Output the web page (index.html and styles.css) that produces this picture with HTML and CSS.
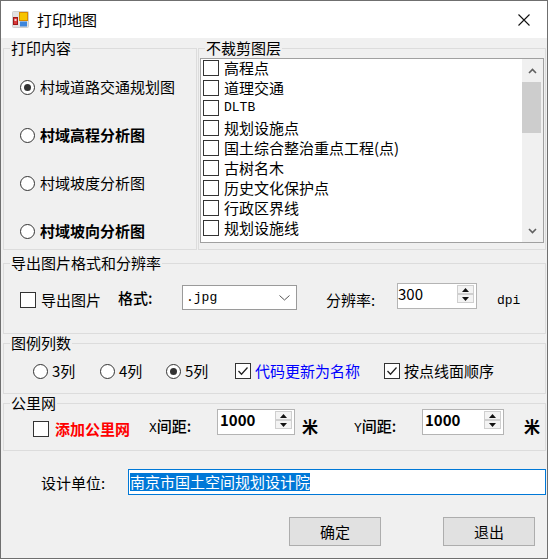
FILE: index.html
```html
<!DOCTYPE html>
<html lang="zh">
<head>
    <meta charset="UTF-8">
    <title>打印地图</title>
    <link rel="stylesheet" href="styles.css">
</head>
<body>
    <div class="window">
        <div class="titlebar">
            <svg class="app-icon" viewBox="0 0 17 17">
                <rect x="0.5" y="0.5" width="16" height="16" rx="1" fill="#e2e2e2" stroke="#cfcfcf"/>
                <rect x="7.5" y="1.5" width="8" height="8" fill="#f6c400" stroke="#d88a00"/>
                <rect x="1.5" y="6.5" width="4" height="7" fill="#d93a3a" stroke="#a01818"/>
                <rect x="2.5" y="8" width="2" height="2" fill="#f4d0d0"/>
                <rect x="8" y="10.5" width="7" height="5" fill="#3d86dc"/>
            </svg>
            <span class="title">打印地图</span>
            <span class="close">
                <svg width="12" height="12" viewBox="0 0 12 12"><path d="M0.5 0.5 L11.5 11.5 M11.5 0.5 L0.5 11.5" stroke="#111" stroke-width="1.1"/></svg>
            </span>
        </div>

        <div class="body">
            <div class="top-row">
                <fieldset class="group group-tall">
                    <legend>打印内容</legend>
                    <div class="radio-list">
                        <label class="opt"><span class="radio checked"></span>村域道路交通规划图</label>
                        <label class="opt bold"><span class="radio"></span>村域高程分析图</label>
                        <label class="opt"><span class="radio"></span>村域坡度分析图</label>
                        <label class="opt bold"><span class="radio"></span>村域坡向分析图</label>
                    </div>
                </fieldset>

                <fieldset class="group group-tall">
                    <legend>不裁剪图层</legend>
                    <div class="listbox">
                        <ul class="items">
                            <li><span class="check"></span><span>高程点</span></li>
                            <li><span class="check"></span><span>道理交通</span></li>
                            <li><span class="check"></span><span class="mono">DLTB</span></li>
                            <li><span class="check"></span><span>规划设施点</span></li>
                            <li><span class="check"></span><span>国土综合整治重点工程(点)</span></li>
                            <li><span class="check"></span><span>古树名木</span></li>
                            <li><span class="check"></span><span>历史文化保护点</span></li>
                            <li><span class="check"></span><span>行政区界线</span></li>
                            <li><span class="check"></span><span>规划设施线</span></li>
                        </ul>
                        <div class="scrollbar">
                            <span class="sb-btn">
                                <svg width="9" height="6" viewBox="0 0 9 6"><path d="M1 5 L4.5 1.5 L8 5" fill="none" stroke="#606060" stroke-width="1.6"/></svg>
                            </span>
                            <span class="sb-thumb"></span>
                            <span class="sb-fill"></span>
                            <span class="sb-btn">
                                <svg width="9" height="6" viewBox="0 0 9 6"><path d="M1 1 L4.5 4.5 L8 1" fill="none" stroke="#606060" stroke-width="1.6"/></svg>
                            </span>
                        </div>
                    </div>
                </fieldset>
            </div>

            <fieldset class="group group-export">
                <legend>导出图片格式和分辨率</legend>
                <div class="export-row">
                    <label class="opt export-chk"><span class="check"></span>导出图片</label>
                    <span class="field-label fmt-label">格式:</span>
                    <div class="combo">
                        <span class="mono">.jpg</span>
                        <svg width="11" height="6" viewBox="0 0 11 6"><path d="M0.5 0.5 L5.5 5 L10.5 0.5" fill="none" stroke="#555" stroke-width="1"/></svg>
                    </div>
                    <span class="field-label dpi-label">分辨率:</span>
                    <div class="spin">
                        <span class="spin-val">300</span>
                        <span class="spin-btns">
                            <span><svg width="7" height="4" viewBox="0 0 7 4"><path d="M0 4 L3.5 0 L7 4Z" fill="#111"/></svg></span>
                            <span><svg width="7" height="4" viewBox="0 0 7 4"><path d="M0 0 L3.5 4 L7 0Z" fill="#111"/></svg></span>
                        </span>
                    </div>
                    <span class="mono dpi-unit">dpi</span>
                </div>
            </fieldset>

            <fieldset class="group group-cols">
                <legend>图例列数</legend>
                <div class="cols-row">
                    <label class="opt col-3"><span class="radio"></span>3列</label>
                    <label class="opt col-4"><span class="radio"></span>4列</label>
                    <label class="opt col-5"><span class="radio checked"></span>5列</label>
                    <label class="opt col-code blue">
                        <span class="check"><svg viewBox="0 0 14 14"><path d="M2.5 7 L5.5 10.2 L11.5 3.5" fill="none" stroke="#222" stroke-width="1.3"/></svg></span>代码更新为名称
                    </label>
                    <label class="opt">
                        <span class="check"><svg viewBox="0 0 14 14"><path d="M2.5 7 L5.5 10.2 L11.5 3.5" fill="none" stroke="#222" stroke-width="1.3"/></svg></span>按点线面顺序
                    </label>
                </div>
            </fieldset>

            <fieldset class="group group-km">
                <legend>公里网</legend>
                <div class="km-row">
                    <label class="opt km-chk"><span class="check"></span><span class="red">添加公里网</span></label>
                    <span class="field-label km-label"><span class="mono">X</span>间距:</span>
                    <div class="spin km-spin">
                        <span class="spin-val strong">1000</span>
                        <span class="spin-btns">
                            <span><svg width="7" height="4" viewBox="0 0 7 4"><path d="M0 4 L3.5 0 L7 4Z" fill="#111"/></svg></span>
                            <span><svg width="7" height="4" viewBox="0 0 7 4"><path d="M0 0 L3.5 4 L7 0Z" fill="#111"/></svg></span>
                        </span>
                    </div>
                    <span class="unit unit-x">米</span>
                    <span class="field-label km-label"><span class="mono">Y</span>间距:</span>
                    <div class="spin km-spin wide">
                        <span class="spin-val strong">1000</span>
                        <span class="spin-btns">
                            <span><svg width="7" height="4" viewBox="0 0 7 4"><path d="M0 4 L3.5 0 L7 4Z" fill="#111"/></svg></span>
                            <span><svg width="7" height="4" viewBox="0 0 7 4"><path d="M0 0 L3.5 4 L7 0Z" fill="#111"/></svg></span>
                        </span>
                    </div>
                    <span class="unit unit-y">米</span>
                </div>
            </fieldset>

            <div class="design-row">
                <span class="design-label">设计单位:</span>
                <div class="textbox"><span class="selected">南京市国土空间规划设计院</span></div>
            </div>

            <div class="button-row">
                <button class="btn">确定</button>
                <button class="btn">退出</button>
            </div>
        </div>
    </div>
</body>
</html>
```

FILE: styles.css
```css
* {
    box-sizing: border-box;
}

body {
    margin: 0;
    font-family: "Noto Sans CJK SC", "Liberation Sans", sans-serif;
    font-size: 15px;
    color: #000;
    background: #fff;
}

.window {
    width: 548px;
    height: 559px;
    border: 1px solid #6f6f6f;
    background: #f0f0f0;
    display: flex;
    flex-direction: column;
}

/* title bar */
.titlebar {
    height: 37px;
    flex-shrink: 0;
    background: #fff;
    display: flex;
    align-items: center;
    padding-left: 11px;
}

.app-icon {
    width: 17px;
    height: 17px;
    margin-right: 8px;
}

.title {
    line-height: 18px;
}

.close {
    margin-left: auto;
    width: 46px;
    height: 37px;
    display: flex;
    align-items: center;
    justify-content: center;
}

/* body */
.body {
    flex: 1;
    padding: 2px 1px 0 2px;
}

.top-row {
    display: grid;
    grid-template-columns: 194px 1fr;
    column-gap: 1px;
}

.group {
    margin: 0;
    padding: 0;
    min-width: 0;
    border: 1px solid #dcdcdc;
}

.group legend {
    margin-left: 6px;
    padding: 0 1px;
    line-height: 16px;
}

.group-tall {
    height: 210px;
}

.opt {
    display: flex;
    align-items: center;
    gap: 5px;
    height: 20px;
    line-height: 20px;
    white-space: nowrap;
}

.bold {
    font-weight: 700;
}

.radio {
    width: 15px;
    height: 15px;
    flex-shrink: 0;
    border: 1px solid #333;
    border-radius: 50%;
    background: #fff;
    display: flex;
    align-items: center;
    justify-content: center;
}

.radio.checked::after {
    content: '';
    width: 7px;
    height: 7px;
    border-radius: 50%;
    background: #333;
}

.check {
    width: 16px;
    min-width: 16px;
    height: 16px;
    flex-shrink: 0;
    border: 1px solid #333;
    background: #fff;
    display: flex;
}

.check svg {
    width: 14px;
    height: 14px;
}

.mono {
    font-family: "Liberation Mono", monospace;
    font-size: 13px;
}

.radio-list {
    display: flex;
    flex-direction: column;
    gap: 28px;
    padding: 21px 0 0 16px;
}

/* layer list */
.listbox {
    margin: 2px 0 0 1px;
    width: 344px;
    height: 185px;
    border: 1px solid #a0a0a0;
    background: #fff;
    display: flex;
    overflow: hidden;
}

.items {
    list-style: none;
    margin: -1px 0 0 0;
    padding: 0 0 0 2px;
    flex: 1;
}

.items li {
    height: 20px;
    line-height: 18px;
    display: flex;
    align-items: center;
    gap: 5px;
    white-space: nowrap;
}

.scrollbar {
    width: 21px;
    background: #f0f0f0;
    display: flex;
    flex-direction: column;
}

.sb-btn {
    height: 23px;
    display: flex;
    align-items: center;
    justify-content: center;
}

.sb-thumb {
    height: 51px;
    margin: 0 2px 0 0;
    background: #cdcdcd;
}

.sb-fill {
    flex: 1;
}

/* export group */
.group-export {
    margin-top: 5px;
    height: 79px;
}

.export-row {
    display: flex;
    align-items: flex-start;
    padding: 12px 0 0 16px;
}

.field-label {
    line-height: 20px;
    white-space: nowrap;
}

.export-chk {
    width: 98px;
    margin-top: 7px;
}

.fmt-label {
    width: 64px;
    margin-top: 5px;
    font-weight: 500;
}

.combo {
    width: 115px;
    height: 25px;
    margin-top: 2px;
    border: 1px solid #9a9a9a;
    background: #fff;
    display: flex;
    align-items: center;
    justify-content: space-between;
    padding: 0 6px 0 3px;
}

.dpi-label {
    width: 71px;
    margin: 7px 0 0 29px;
}

.spin {
    width: 80px;
    height: 26px;
    border: 1px solid #b4b4b4;
    background: #fff;
    display: flex;
    align-items: flex-start;
    padding: 1px 2px 0 0;
}

.spin-val {
    flex: 1;
    line-height: 18px;
}

.strong {
    font-weight: 700;
    padding-left: 2px;
}

.spin-btns {
    width: 17px;
    height: 18px;
    display: flex;
    flex-direction: column;
}

.spin-btns span {
    flex: 1;
    border: 1px solid #cfcfcf;
    background: #f3f3f3;
    display: flex;
    align-items: center;
    justify-content: center;
}

.dpi-unit {
    margin: 8px 0 0 20px;
    line-height: 20px;
}

/* legend columns group */
.group-cols {
    margin-top: 1px;
    height: 59px;
}

.cols-row {
    display: flex;
    align-items: center;
    padding: 10px 0 0 29px;
}

.cols-row .opt {
    gap: 4px;
}

.col-3 {
    width: 67px;
}

.col-4 {
    width: 66px;
}

.col-5 {
    width: 69px;
}

.col-code {
    width: 149px;
}

.blue {
    color: #0000ff;
}

/* km grid group */
.group-km {
    margin-top: 1px;
    height: 56px;
}

.km-row {
    display: flex;
    align-items: flex-start;
    margin-top: -2px;
    padding-left: 29px;
}

.km-chk {
    width: 116px;
    margin-top: 10px;
    gap: 6px;
}

.red {
    color: #ff0000;
    font-weight: 700;
}

.km-label {
    width: 68px;
    margin-top: 7px;
    font-weight: 500;
}

.km-spin {
    width: 78px;
}

.km-spin.wide {
    width: 82px;
}

.unit {
    margin-top: 7px;
    line-height: 20px;
    font-weight: 700;
    font-size: 16px;
}

.unit-x {
    margin-left: 7px;
    width: 52px;
}

.unit-y {
    margin-left: 20px;
}

/* design unit */
.design-row {
    display: flex;
    align-items: center;
    height: 26px;
    margin-top: 18px;
    padding-left: 38px;
}

.design-label {
    width: 87px;
    white-space: nowrap;
}

.textbox {
    flex: 1;
    height: 26px;
    border: 1px solid #0078d7;
    background: #fff;
    display: flex;
    align-items: center;
    padding-left: 1px;
}

.selected {
    background: #0078d7;
    color: #fff;
    line-height: 18px;
}

/* buttons */
.button-row {
    display: flex;
    gap: 62px;
    margin-top: 22px;
    padding-left: 286px;
}

.btn {
    width: 92px;
    height: 29px;
    border: 1px solid #adadad;
    background: #e1e1e1;
    font: inherit;
    color: #000;
    padding: 0;
}
```
